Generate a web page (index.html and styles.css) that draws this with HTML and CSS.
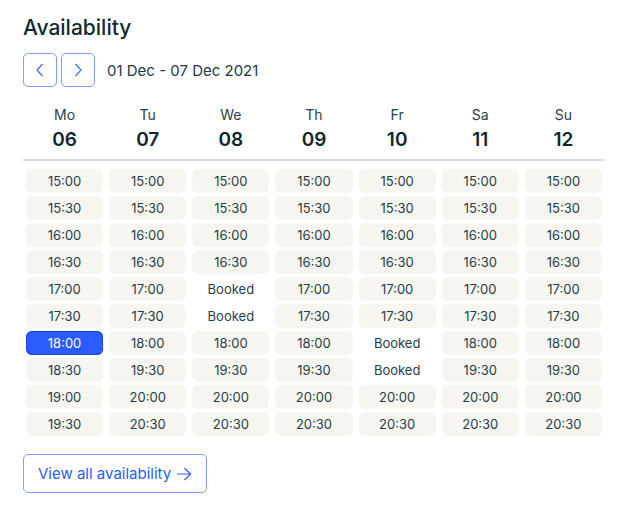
FILE: index.html
```html
<!DOCTYPE html>
<html lang="en">
<head>
  <meta charset="UTF-8" />
  <title>Availability</title>
  <link rel="stylesheet" href="styles.css">
</head>
<body>
  <div class="availability">
    <h2 class="title">Availability</h2>
    <div class="week-nav">
      <button class="nav-btn" aria-label="Previous week">
        <svg width="14" height="16" viewBox="0 0 14 16"><path d="M9.5 2 L4 8 L9.5 14" fill="none" stroke="#3d68ff" stroke-width="1.2"/></svg>
      </button>
      <button class="nav-btn" aria-label="Next week">
        <svg width="14" height="16" viewBox="0 0 14 16"><path d="M4.5 2 L10 8 L4.5 14" fill="none" stroke="#3d68ff" stroke-width="1.2"/></svg>
      </button>
      <span class="range">01 Dec - 07 Dec 2021</span>
    </div>

    <div class="days" id="days"></div>

    <button class="view-all">View all availability
      <svg width="16" height="14" viewBox="0 0 16 14"><path d="M1 7 H14.5 M8.5 1 L14.5 7 L8.5 13" fill="none" stroke="#2b5cff" stroke-width="1.2"/></svg>
    </button>
  </div>

  <script>
    var days = [
      { name: 'Mo', num: '06', slots: ['15:00','15:30','16:00','16:30','17:00','17:30','18:00*','18:30','19:00','19:30'] },
      { name: 'Tu', num: '07', slots: ['15:00','15:30','16:00','16:30','17:00','17:30','18:00','19:30','20:00','20:30'] },
      { name: 'We', num: '08', slots: ['15:00','15:30','16:00','16:30','Booked','Booked','18:00','19:30','20:00','20:30'] },
      { name: 'Th', num: '09', slots: ['15:00','15:30','16:00','16:30','17:00','17:30','18:00','19:30','20:00','20:30'] },
      { name: 'Fr', num: '10', slots: ['15:00','15:30','16:00','16:30','17:00','17:30','Booked','Booked','20:00','20:30'] },
      { name: 'Sa', num: '11', slots: ['15:00','15:30','16:00','16:30','17:00','17:30','18:00','19:30','20:00','20:30'] },
      { name: 'Su', num: '12', slots: ['15:00','15:30','16:00','16:30','17:00','17:30','18:00','19:30','20:00','20:30'] }
    ];

    var wrap = document.getElementById('days');
    days.forEach(function (d) {
      var col = document.createElement('div');
      col.className = 'day';
      var html = '<div class="day-head"><div class="day-name">' + d.name + '</div><div class="day-num">' + d.num + '</div></div><div class="slots">';
      d.slots.forEach(function (s) {
        if (s === 'Booked') html += '<div class="slot booked">Booked</div>';
        else if (s.slice(-1) === '*') html += '<div class="slot selected">' + s.slice(0, -1) + '</div>';
        else html += '<div class="slot">' + s + '</div>';
      });
      col.innerHTML = html + '</div>';
      wrap.appendChild(col);
    });
  </script>
</body>
</html>
```

FILE: styles.css
```css
body {
  margin: 0;
  background: #fff;
  font-family: Inter, 'Noto Sans', sans-serif;
  color: #173640;
}
.availability {
  width: 582px;
  padding: 16px 0 0 23px;
}
.title {
  margin: 0;
  font-size: 21px;
  line-height: 24px;
  font-weight: 500;
  color: #112a32;
}
.week-nav {
  display: flex;
  align-items: center;
  gap: 4px;
  margin-top: 13px;
}
.nav-btn {
  width: 34px;
  height: 34px;
  padding: 0;
  border: 1px solid #7f9cff;
  border-radius: 5px;
  background: #fff;
  display: flex;
  align-items: center;
  justify-content: center;
}
.range {
  margin-left: 8px;
  font-size: 15px;
  color: #1d3a43;
}
.days {
  display: grid;
  grid-template-columns: repeat(7, 1fr);
  margin-top: 18px;
}
.day-head {
  text-align: center;
  border-bottom: 2px solid #dcdcdc;
  padding-bottom: 7px;
}
.day-name {
  font-size: 14px;
  line-height: 18px;
  color: #2a4149;
  margin-top: 1px;
}
.day-num {
  font-size: 19px;
  line-height: 24px;
  font-weight: 600;
  color: #0f262d;
  margin-top: 4px;
}
.slots {
  display: flex;
  flex-direction: column;
  gap: 3px;
  padding: 8px 3px 0 3px;
}
.slot {
  height: 24px;
  line-height: 24px;
  text-align: center;
  font-size: 13px;
  background: #f7f5f0;
  border-radius: 6px;
  color: #1f3e47;
}
.slot.booked {
  background: none;
}
.slot.selected {
  background: #2b5cff;
  color: #fff;
  box-shadow: inset 0 0 0 1px #1b47e0;
}
.view-all {
  margin-top: 18px;
  height: 39px;
  padding: 0 14px;
  border: 1px solid #7f9cff;
  border-radius: 5px;
  background: #fff;
  color: #2b5cff;
  font-family: inherit;
  font-size: 15px;
  display: flex;
  align-items: center;
  gap: 5px;
}
```
